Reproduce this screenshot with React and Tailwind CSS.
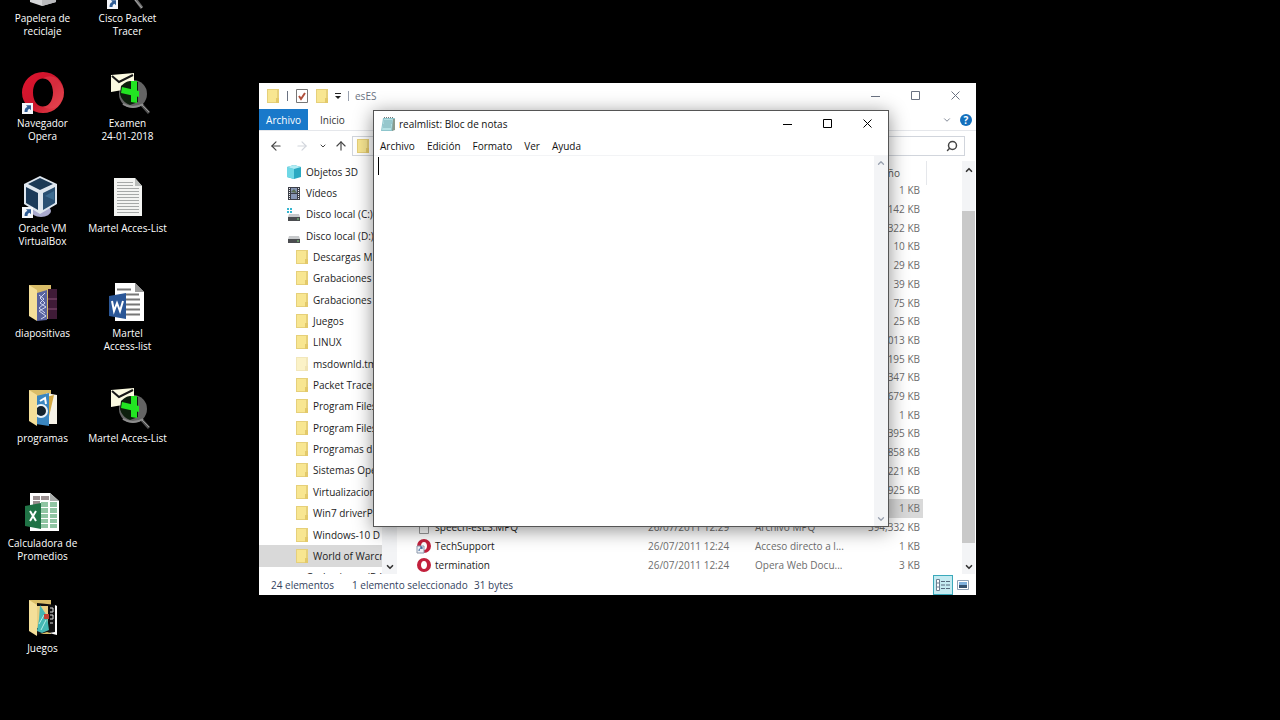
import React from 'react'
import { ArrowLeft, ArrowRight, ArrowUp, ChevronDown, ChevronUp, Search } from 'lucide-react'

const FONT = "font-['Open_Sans','Noto_Sans',sans-serif]"

function Shortcut() {
  return (
    <g>
      <rect x="0" y="36" width="11" height="11" fill="#f4f6fa" />
      <path d="M2.500 45c0-3 1-4.500 3-5l-1.500-1.800h5v5l-1.500-1.500c-1.500.6-2 1.600-2 3.300z" fill="#2f5c94" />
    </g>
  )
}

function BinIcon() {
  return (
    <svg className="h-12 w-12" viewBox="0 0 48 48" aria-hidden="true">
      <path d="M10 4h28l-1 34-14 4-12-4z" fill="#d5d6d8" />
      <path d="M23 6v36l14-4 1-34z" fill="#b9babd" />
    </svg>
  )
}

function OperaDesktopIcon() {
  return (
    <svg className="h-12 w-12" viewBox="0 0 48 48" aria-hidden="true">
      <defs>
        <linearGradient id="operaRed" x1="0" y1="0" x2="1" y2="1">
          <stop offset="0" stopColor="#e0142f" />
          <stop offset=".55" stopColor="#c9152b" />
          <stop offset="1" stopColor="#e84a50" />
        </linearGradient>
      </defs>
      <path fillRule="evenodd" d="M24 3a21 20.500 0 1 0 0 41 21 20.500 0 1 0 0-41zm0 6.500c6 0 10 6 10 14s-4 14-10 14-10-6-10-14 4-14 10-14z" fill="url(#operaRed)" />
      <path d="M24 9.500c4-3 10-3 14 0 9 8 9 20 0 28-4 3-10 3-14 0 6 0 10-6 10-14s-4-14-10-14z" fill="#e8505a" opacity=".4" />
      <g transform="translate(3 -2)"><Shortcut /></g>
    </svg>
  )
}

function MagnifierIcon() {
  return (
    <svg className="h-12 w-12" viewBox="0 0 48 48" aria-hidden="true">
      <circle cx="29" cy="25" r="14" fill="#646464" />
      <path d="M37 35l8 9" stroke="#555" strokeWidth="3" />
      <path d="M38 36l7 7" stroke="#999" strokeWidth="1" />
      <path d="M7 6l23-2v15l-23 4z" fill="#fbfae0" />
      <path d="M8 7l7 6 14-7" fill="none" stroke="#171717" strokeWidth="2" />
      <path d="M17 17c2-2 6-5 9-5l8 1v20l-8 3c-6-2-9-7-10-11z" fill="#0d1f0d" />
      <path d="M27 12h6v22l-6-1z" fill="#22e522" />
      <path d="M18 18l17 4v6l-18-4z" fill="#22e522" />
      <path d="M19 35c6 4 14 4 20 0" fill="none" stroke="#8d8d8d" strokeWidth="2" />
    </svg>
  )
}

function TracerIcon() {
  return (
    <svg className="h-12 w-12" viewBox="0 0 48 48" aria-hidden="true">
      <path d="M29 32l9 12" stroke="#6b6b6b" strokeWidth="3" />
      <path d="M31 36l7 8" stroke="#aaa" strokeWidth="1" />
      <g transform="translate(3 -2)"><Shortcut /></g>
    </svg>
  )
}

function VirtualBoxIcon() {
  return (
    <svg className="h-12 w-12" viewBox="0 0 48 48" aria-hidden="true">
      <ellipse cx="22" cy="37" rx="10" ry="6" fill="#a9aace" />
      <path d="M21 2l17 8v20l-17 10L5 30V10z" fill="#dfe7ef" />
      <path d="M21 4l13 6-13 6-12-6z" fill="#1c3a56" />
      <path d="M7 13l12 6v17L7 29z" fill="#1b3b5a" />
      <path d="M36 13l-12 6v17l12-7z" fill="#2a5174" />
      <path d="M26 22l9-5v9z" fill="#3d6c91" />
      <g transform="translate(3 -3)"><Shortcut /></g>
    </svg>
  )
}

function PaperIcon() {
  return (
    <svg className="h-12 w-12" viewBox="0 0 48 48" aria-hidden="true">
      <path d="M10 4h21l7 8v30H10z" fill="#f3f4f2" />
      <path d="M31 4v8h7z" fill="#b9bcba" />
      <path d="M13 8.500h16M13 11.500h16M13 14.500h22M13 17.500h22M13 20.500h22M13 23.500h22M13 26.500h22M13 29.500h22M13 32.500h22M13 35.500h22M13 38.500h22" stroke="#a6a9a8" strokeWidth="1" />
    </svg>
  )
}

function WordIcon() {
  return (
    <svg className="h-12 w-12" viewBox="0 0 48 48" aria-hidden="true">
      <path d="M11 4h20l9 9v29H11z" fill="#fff" />
      <path d="M31 4v9h9z" fill="#9a9a9a" />
      <path d="M13 10.500h14M22 15.500h13M22 20.500h14M22 25.500h14M22 30.500h14M22 35.500h14" stroke="#777" strokeWidth="2" />
      <path d="M5 17l17-3v26L5 37z" fill="#2b5797" />
      <path d="M8 22l2 10 3-8 3 8 3-10" fill="none" stroke="#fff" strokeWidth="2" />
    </svg>
  )
}

function ExcelIcon() {
  return (
    <svg className="h-12 w-12" viewBox="0 0 48 48" aria-hidden="true">
      <path d="M11 4h20l9 8v30H11z" fill="#fff" />
      <path d="M31 4v8h9z" fill="#a9adab" />
      <path d="M14 7h7v4h-7zM22 7h8v4h-8zM14 12h7v4h-7z" fill="#9a8f90" />
      <path d="M22 13h7v5h-7zM31 13h7v5h-7zM22 19h7v5h-7zM31 19h7v5h-7zM22 25h7v4h-7zM31 25h7v4h-7zM22 30h7v4h-7zM31 30h7v4h-7zM22 35h7v4h-7zM31 35h7v4h-7z" fill="#90c5a3" />
      <path d="M6 17l16-3v26L6 37z" fill="#207346" />
      <path d="M11 22l6 10M17 22l-6 10" stroke="#fff" strokeWidth="2" />
    </svg>
  )
}

function OpenFolder({ children }) {
  return (
    <svg className="h-12 w-12" viewBox="0 0 48 48" aria-hidden="true">
      <path d="M10 6h22v34H17z" fill="#d9bd68" />
      {children}
      <path d="M10 6l8 5v31l-8-5z" fill="#f4df99" />
    </svg>
  )
}

function SlidesIcon() {
  return (
    <OpenFolder>
      <path d="M29 10h9v30h-9z" fill="#3f1b37" />
      <path d="M29 20h9M29 30h9" stroke="#8a5076" strokeWidth="1" />
      <path d="M18 14l10-3v30l-10 1z" fill="#59639f" />
      <path d="M20 16l5 4-4 4 6 4-7 4 7 5-5 3M26 14l-5 5 5 5-6 5 6 5" fill="none" stroke="#d3d8f2" strokeWidth="1" />
    </OpenFolder>
  )
}

function ProgramsIcon() {
  return (
    <OpenFolder>
      <path d="M27 9l11 2v29H27z" fill="#f6f3e8" />
      <path d="M27 13l8-2-6 26z" fill="#d4a944" />
      <path d="M17 12l13-3v33l-13-2z" fill="#3a86c0" />
      <circle cx="22" cy="27" r="6" fill="#14232e" stroke="#e9f2f8" strokeWidth="2" />
      <path d="M21 17l5-3 1 6" fill="none" stroke="#fff" strokeWidth="2" />
    </OpenFolder>
  )
}

function GamesIcon() {
  return (
    <OpenFolder>
      <path d="M18 9l20 2v30l-10-3-10 3z" fill="#111" />
      <path d="M36 11l2 1v29l-8-2 6-1z" fill="#fff" />
      <path d="M17 12h12v22H17z" fill="#e8cf83" />
      <path d="M21 11l7 11 2 14-7 3-5-2 2-12z" fill="#45b8b4" />
      <path d="M20 30l5-9M22 36l5-10" stroke="#b5eeea" strokeWidth="1" />
      <path d="M25 20h5v5h-5z" fill="#c34233" />
      <path d="M31 14h3v4h-3M31 21h3v4h-3M31 29h3" fill="none" stroke="#ddd" strokeWidth="1" />
    </OpenFolder>
  )
}

const desktopColumns = [
  [
    { label: ['Papelera de', 'reciclaje'], Icon: BinIcon },
    { label: ['Navegador', 'Opera'], Icon: OperaDesktopIcon },
    { label: ['Oracle VM', 'VirtualBox'], Icon: VirtualBoxIcon },
    { label: ['diapositivas'], Icon: SlidesIcon },
    { label: ['programas'], Icon: ProgramsIcon },
    { label: ['Calculadora de', 'Promedios'], Icon: ExcelIcon },
    { label: ['Juegos'], Icon: GamesIcon },
  ],
  [
    { label: ['Cisco Packet', 'Tracer'], Icon: TracerIcon },
    { label: ['Examen', '24-01-2018'], Icon: MagnifierIcon },
    { label: ['Martel Acces-List'], Icon: PaperIcon },
    { label: ['Martel', 'Access-list'], Icon: WordIcon },
    { label: ['Martel Acces-List'], Icon: MagnifierIcon },
  ],
]

function FolderIcon({ pale }) {
  return (
    <svg className={pale ? 'h-4 w-3 shrink-0 opacity-50' : 'h-4 w-3 shrink-0'} viewBox="0 0 12 16" aria-hidden="true">
      <path d="M0 1h12v14H0z" fill="#e6d07a" />
      <path d="M1 2h9v12H1z" fill="#f8e691" />
      <path d="M9 10h3v5H9z" fill="#e3c96a" />
    </svg>
  )
}

function CubeIcon() {
  return (
    <svg className="h-4 w-4 shrink-0" viewBox="0 0 16 16" aria-hidden="true">
      <path d="M1 3l7-2 7 2v10l-7 2-7-2z" fill="#2aa9c2" />
      <path d="M1 3l7 2v10l-7-2z" fill="#6fd8e6" />
      <path d="M1 3l7-2 7 2-7 2z" fill="#b3edf4" />
    </svg>
  )
}

function FilmIcon() {
  return (
    <svg className="h-4 w-4 shrink-0" viewBox="0 0 16 16" aria-hidden="true">
      <path d="M2 2h12v13H2z" fill="#3c3f48" />
      <path d="M5 3h6v5H5zM5 9h6v5H5z" fill="#8796b5" />
      <path d="M3.500 3v11M12.500 3v11" stroke="#eee" strokeDasharray="1 1" />
      <path d="M5 7l3-3 3 4z" fill="#5a6f53" />
    </svg>
  )
}

function DriveIcon({ system }) {
  return (
    <svg className="h-4 w-4 shrink-0" viewBox="0 0 16 16" aria-hidden="true">
      {system && <path d="M1 2h2v2H1zM4 2h2v2H4zM1 5h2v2H1zM4 5h2v2H4z" fill="#35b6d0" />}
      <path d="M3 8h10l1 3H2z" fill="#c8cacc" />
      <path d="M2 11h12v4H2z" fill="#4b4d50" />
      <path d="M11 13h2" stroke="#7ed67e" />
    </svg>
  )
}

const treeItems = [
  { name: 'Objetos 3D', icon: <CubeIcon /> },
  { name: 'Vídeos', icon: <FilmIcon /> },
  { name: 'Disco local (C:)', icon: <DriveIcon system /> },
  { name: 'Disco local (D:)', icon: <DriveIcon /> },
  { name: 'Descargas M', folder: true },
  { name: 'Grabaciones', folder: true },
  { name: 'Grabaciones', folder: true },
  { name: 'Juegos', folder: true },
  { name: 'LINUX', folder: true },
  { name: 'msdownld.tmp', folder: true, pale: true },
  { name: 'Packet Tracer', folder: true },
  { name: 'Program Files', folder: true },
  { name: 'Program Files', folder: true },
  { name: 'Programas d', folder: true },
  { name: 'Sistemas Operativos', folder: true },
  { name: 'Virtualizacion', folder: true },
  { name: 'Win7 driverPack', folder: true },
  { name: 'Windows-10 D', folder: true },
  { name: 'World of Warcraft', folder: true, selected: true },
  { name: 'Grabaciones (D:)', icon: <DriveIcon /> },
]

function OperaIcon({ link }) {
  return (
    <svg className="h-4 w-4 shrink-0" viewBox="0 0 16 16" aria-hidden="true">
      <path fillRule="evenodd" d="M8 1a7 7 0 1 0 0 14A7 7 0 1 0 8 1zm0 3c2 0 3 2 3 4s-1 4-3 4-3-2-3-4 1-4 3-4z" fill="#c2203c" />
      {link && <path d="M1 8h7v7H1z" fill="#eef2f8" stroke="#8c98ab" />}
      {link && <path d="M3 13c0-2 1-3 3-3m-2-1h2v2" fill="none" stroke="#2f5c94" />}
    </svg>
  )
}

function BlankFileIcon() {
  return (
    <svg className="h-4 w-4 shrink-0" viewBox="0 0 16 16" aria-hidden="true">
      <path d="M3.500 1.500h9v13h-9z" fill="#fff" stroke="#999" />
    </svg>
  )
}

const files = [
  { size: '1 KB' },
  { size: '142 KB' },
  { size: '322 KB' },
  { size: '10 KB' },
  { size: '29 KB' },
  { size: '39 KB' },
  { size: '75 KB' },
  { size: '25 KB' },
  { size: '013 KB' },
  { size: '195 KB' },
  { size: '347 KB' },
  { size: '679 KB' },
  { size: '1 KB' },
  { size: '395 KB' },
  { size: '858 KB' },
  { size: '221 KB' },
  { size: '925 KB' },
  { size: '1 KB', selected: true },
  { name: 'speech-esES.MPQ', date: '26/07/2011 12:29', type: 'Archivo MPQ', size: '394,332 KB', icon: <BlankFileIcon /> },
  { name: 'TechSupport', date: '26/07/2011 12:24', type: 'Acceso directo a l...', size: '1 KB', icon: <OperaIcon link /> },
  { name: 'termination', date: '26/07/2011 12:24', type: 'Opera Web Docu...', size: '3 KB', icon: <OperaIcon /> },
]

function WindowButtons({ className }) {
  return (
    <div className={className}>
      <button aria-label="Minimizar" className="flex h-full w-10 items-center justify-center">
        <svg className="h-2.5 w-2.5" viewBox="0 0 10 10"><path d="M0 5.500h9" stroke="currentColor" /></svg>
      </button>
      <button aria-label="Maximizar" className="flex h-full w-10 items-center justify-center">
        <svg className="h-2.5 w-2.5" viewBox="0 0 10 10"><path d="M.5.5h8v8h-8z" fill="none" stroke="currentColor" /></svg>
      </button>
      <button aria-label="Cerrar" className="flex h-full w-10 items-center justify-center">
        <svg className="h-2.5 w-2.5" viewBox="0 0 10 10"><path d="M.5.5l8 8M8.500.5l-8 8" stroke="currentColor" /></svg>
      </button>
    </div>
  )
}

function Explorer() {
  return (
    <section aria-label="esES" className="absolute left-[259px] top-[83px] flex h-[512px] w-[717px] flex-col bg-white text-[10px] leading-4 text-[#1c1c1c]">
      {/* Title bar */}
      <div className="flex h-[26px] shrink-0 items-center pl-2">
        <FolderIcon />
        <span className="ml-2 h-2.5 w-px bg-gray-500"></span>
        <button aria-label="Propiedades" className="ml-2">
          <svg className="h-3.5 w-3" viewBox="0 0 12 14">
            <path d="M.5.5h11v13H.5z" fill="#fff" stroke="#777" />
            <path d="M3 7l2 3 4-6" fill="none" stroke="#b0503c" strokeWidth="2" />
          </svg>
        </button>
        <button aria-label="Nueva carpeta" className="ml-2"><FolderIcon /></button>
        <button aria-label="Personalizar" className="ml-1.5">
          <svg className="h-2 w-2" viewBox="0 0 8 8"><path d="M1 1.500h6" stroke="#222" /><path d="M1 4h6L4 7z" fill="#222" /></svg>
        </button>
        <span className="ml-1.5 h-2.5 w-px bg-gray-400"></span>
        <span className="ml-1.5 text-gray-500">esES</span>
        <WindowButtons className="ml-auto flex h-full text-gray-500" />
      </div>

      {/* Ribbon tabs */}
      <div className="flex h-[22px] shrink-0 items-center border-b border-gray-200">
        <button className="h-full w-[49px] bg-[#1979ca] text-white">Archivo</button>
        <button className="ml-3 text-[#333]">Inicio</button>
        <button aria-label="Expandir la cinta" className="ml-auto text-gray-500"><ChevronDown size={10} /></button>
        <button aria-label="Ayuda" className="ml-2 mr-1 h-3 w-3 rounded-full bg-[#1470bd] text-[10px] font-bold leading-3 text-white">?</button>
      </div>

      {/* Navigation row */}
      <div className="flex h-[30px] shrink-0 items-center text-[#444]">
        <button aria-label="Atrás" className="ml-2.5"><ArrowLeft size={14} /></button>
        <button aria-label="Adelante" className="ml-3 text-gray-300"><ArrowRight size={14} /></button>
        <button aria-label="Recientes" className="ml-2.5"><ChevronDown size={8} strokeWidth={3} /></button>
        <button aria-label="Subir" className="ml-[7px]"><ArrowUp size={14} /></button>
        <div className="ml-1 flex h-5 w-[400px] items-center border border-gray-300 pl-1"><FolderIcon /></div>
        <label className="ml-2 mr-[11px] flex h-5 min-w-0 flex-1 items-center border border-gray-300 pr-1.5">
          <input aria-label="Buscar en esES" className="min-w-0 flex-1 outline-none" />
          <Search size={12} strokeWidth={3} className="-scale-x-100" />
        </label>
      </div>

      {/* Tree and file list */}
      <div className="flex min-h-0 flex-1">
        <nav className="min-h-0 w-[123px] shrink-0 overflow-hidden">
          <ul className="flex h-[427px] flex-col">
            {treeItems.map((item, i) => (
              <li key={i} className={`flex min-h-0 flex-1 items-center whitespace-nowrap ${item.folder ? 'gap-[5px] pl-[37px]' : 'gap-1 pl-[27px]'} ${item.selected ? 'bg-[#d9d9d9]' : ''}`}>
                {item.folder ? <FolderIcon pale={item.pale} /> : item.icon}
                <span>{item.name}</span>
              </li>
            ))}
          </ul>
        </nav>
        <div className="flex w-[15px] shrink-0 flex-col items-center justify-end bg-gray-100 pb-0.5 text-[#333]">
          <ChevronDown size={10} strokeWidth={4} />
        </div>

        <table className="h-[413px] w-[526px] shrink-0 table-fixed border-collapse whitespace-nowrap text-[#6d6d6d]">
          <colgroup>
            <col />
            <col className="w-[107px]" />
            <col className="w-[94px]" />
            <col className="w-[74px]" />
          </colgroup>
          <thead>
            <tr className="h-5 text-left">
              <th className="p-0 pl-5 pt-1 font-normal">Nombre</th>
              <th className="p-0 pt-1 font-normal">Fecha</th>
              <th className="p-0 pt-1 font-normal">Tipo</th>
              <th className="p-0 pr-[23px] pt-1 text-right font-normal text-[#555]">Tamaño</th>
            </tr>
          </thead>
          <tbody>
            {files.map((file, i) => (
              <tr key={i} className={file.selected ? 'bg-[#d9d9d9]' : ''}>
                <td className="p-0 pl-[19px] text-[#1c1c1c]">
                  <span className="flex items-center gap-[3px]">{file.icon}{file.name}</span>
                </td>
                <td className="p-0">{file.date}</td>
                <td className="p-0">{file.type}</td>
                <td className="p-0 pr-[3px] text-right">{file.size}</td>
              </tr>
            ))}
          </tbody>
        </table>
        <div className="ml-[3px] h-6 w-px shrink-0 bg-gray-200"></div>
        <div className="ml-auto mr-px flex w-[13px] shrink-0 flex-col items-center bg-gray-100 text-[#333]">
          <div className="flex h-[50px] items-start pt-1"><ChevronUp size={10} strokeWidth={4} /></div>
          <div className="w-full flex-1 bg-[#c9c9c9]"></div>
          <div className="flex h-[31px] items-end pb-0.5"><ChevronDown size={10} strokeWidth={4} /></div>
        </div>
      </div>

      {/* Status bar */}
      <div className="flex h-[21px] shrink-0 items-center pl-3 text-[#33425e]">
        <span className="w-[81px]">24 elementos</span>
        <span className="w-[122px] whitespace-nowrap">1 elemento seleccionado</span>
        <span>31 bytes</span>
        <button aria-label="Detalles" className="ml-auto flex h-5 w-5 items-center justify-center border border-[#3ba9bb] bg-[#c5ebf1]">
          <svg className="h-3 w-3.5" viewBox="0 0 14 12">
            <path d="M.5.5h3v11h-3zM.5 4h3M.5 8h3" fill="#fff" stroke="#6b7f92" />
            <path d="M5 2.500h4M10 2.500h4M5 6h4M10 6h4M5 9.500h4M10 9.500h4" stroke="#55697c" />
          </svg>
        </button>
        <button aria-label="Iconos grandes" className="ml-1 mr-[7px]">
          <svg className="h-2.5 w-3" viewBox="0 0 12 10">
            <path d="M.5.5h11v9H.5z" fill="#fff" stroke="#8fa0b5" />
            <path d="M2 2h8v6H2z" fill="#7fb0dd" />
            <path d="M2 5h8v3H2z" fill="#34506e" />
          </svg>
        </button>
      </div>
    </section>
  )
}

function Notepad() {
  return (
    <section aria-label="Bloc de notas" className="absolute left-[373px] top-[110px] flex h-[417px] w-[516px] flex-col border border-[#555] bg-white text-[10px] leading-4 text-[#111] shadow-[0_3px_18px_rgba(0,0,0,0.45)]">
      <div className="flex h-[26px] shrink-0 items-center pl-1.5">
        <svg className="h-4 w-4" viewBox="0 0 16 16" aria-hidden="true">
          <path d="M3 2h12l-2 13H1z" fill="#8ec5cc" />
          <path d="M4 3h9l-2 11H2z" fill="#b4e0e3" />
          <path d="M4 5h8M4 7h8M3 9h8M3 11h8" stroke="#79aeb6" />
          <path d="M13 3h2v11l-3 1z" fill="#8a9a8e" />
          <path d="M4 1.500h10" stroke="#777" strokeDasharray="1 1" />
        </svg>
        <h1 className="ml-[3px]">realmlist: Bloc de notas</h1>
        <WindowButtons className="ml-auto flex h-full text-black" />
      </div>
      <div className="flex h-[18px] shrink-0 items-center gap-3 pl-1.5">
        <button>Archivo</button>
        <button>Edición</button>
        <button>Formato</button>
        <button>Ver</button>
        <button>Ayuda</button>
      </div>
      <div className="relative flex min-h-0 flex-1 border-t border-gray-100">
        <textarea aria-label="Texto" className="min-w-0 flex-1 resize-none p-1 outline-none"></textarea>
        <span className="absolute left-1 top-px h-[18px] w-px bg-black"></span>
        <div className="flex w-[14px] flex-col items-center justify-between bg-gray-100 py-0.5 text-gray-400">
          <ChevronUp size={10} strokeWidth={3} />
          <ChevronDown size={10} strokeWidth={3} />
        </div>
      </div>
    </section>
  )
}

export default function App() {
  return (
    <main className={`relative h-screen w-full overflow-hidden bg-black ${FONT}`}>
      {/* Desktop icons */}
      <div className="-mt-9 flex">
        {desktopColumns.map((column, c) => (
          <div key={c} className="flex w-[85px] flex-col">
            {column.map(({ label, Icon }, i) => (
              <button key={i} className="flex h-[105px] flex-col items-center whitespace-nowrap text-[10px] leading-[13px] text-white">
                <Icon />
                {label.map((line) => (
                  <span key={line}>{line}</span>
                ))}
              </button>
            ))}
          </div>
        ))}
      </div>

      <Explorer />
      <Notepad />
    </main>
  )
}
